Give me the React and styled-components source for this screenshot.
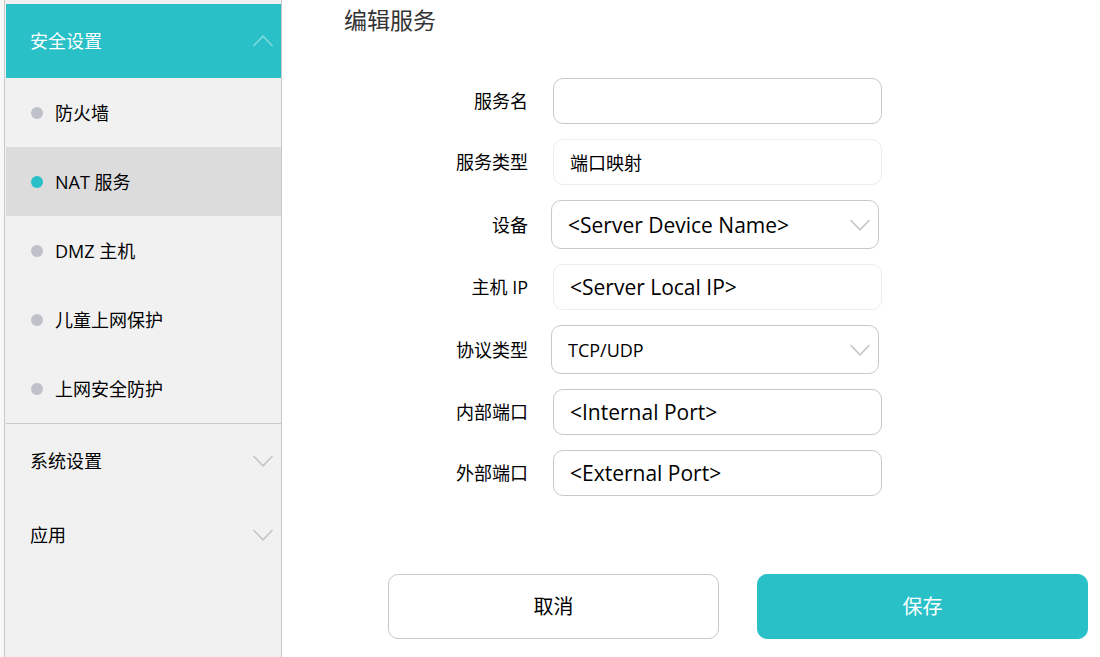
import React, { useState } from "react";
import styled, { createGlobalStyle } from "styled-components";

const TEAL = "#29c0c8";
const LINE = "#c8c8c8";

const GlobalStyle = createGlobalStyle`
  *, *::before, *::after { box-sizing: border-box; }
  body {
    margin: 0;
    background: #fff;
    color: #000;
    font-family: "Open Sans", "Noto Sans CJK SC", sans-serif;
    font-size: 18px;
    font-weight: 400;
    line-height: 24px;
  }
  button, input, select { font: inherit; color: inherit; }
`;

const Page = styled.div`
  display: flex;
  min-height: 100vh;
  background: linear-gradient(to right, #f8f8f8 4px, #fff 4px);
  padding-left: 4px;
`;

const Sidebar = styled.nav`
  flex: 0 0 278px;
  padding: 4px 0 0 1px;
  background: #f1f1f1;
  border: solid ${LINE};
  border-width: 0 1px;
`;

const SectionButton = styled.button`
  display: flex;
  align-items: center;
  justify-content: space-between;
  width: 100%;
  height: 74px;
  padding: 0 8px 0 24px;
  border: 0;
  background: ${(p) => (p.$open ? TEAL : "transparent")};
  color: ${(p) => (p.$open ? "#fff" : "#000")};
  text-align: left;
`;

const SubMenu = styled.ul`
  margin: 0;
  padding: 0;
  list-style: none;
  border-bottom: 1px solid ${LINE};
`;

const SubLink = styled.a`
  display: flex;
  align-items: center;
  gap: 12px;
  height: 69px;
  padding-left: 25px;
  background: ${(p) => (p.$active ? "#dcdcdc" : "transparent")};
  color: inherit;
  text-decoration: none;
`;

const Dot = styled.span`
  flex: none;
  width: 12px;
  height: 12px;
  border-radius: 50%;
  background: ${(p) => (p.$active ? TEAL : "#bec1c9")};
`;

const Main = styled.main`
  flex: 1;
  min-width: 0;
`;

const Title = styled.h1`
  margin: 0 0 38px;
  padding: 0 62px;
  color: #333;
  font-size: 23px;
  font-weight: 400;
  line-height: 40px;
`;

const Fields = styled.div`
  display: flex;
  flex-direction: column;
  gap: 15px;
`;

const FieldRow = styled.div`
  display: grid;
  grid-template-columns: 246fr 329fr 193fr;
  column-gap: 25px;
  align-items: center;
`;

const Label = styled.label`
  text-align: right;
`;

const TextInput = styled.input`
  width: 100%;
  height: 46px;
  padding: 0 16px;
  border: 1px solid ${(p) => (p.readOnly ? "#ededed" : LINE)};
  border-radius: 10px;
  background: #fff;
  font-size: ${(p) => (p.$large ? 21 : 18)}px;
  outline: none;
`;

const SelectBox = styled.div`
  position: relative;
  margin: 0 3px 0 -2px;
`;

const Select = styled.select`
  display: block;
  width: 100%;
  height: 49px;
  padding: 0 40px 0 16px;
  border: 1px solid ${LINE};
  border-radius: 10px;
  background: #fff;
  font-size: ${(p) => (p.$large ? 21 : 18)}px;
  appearance: none;
  outline: none;
`;

const SelectArrow = styled.span`
  position: absolute;
  inset: 0 9px 0 auto;
  display: flex;
  align-items: center;
  pointer-events: none;
`;

const Actions = styled.div`
  display: grid;
  grid-template-columns: 1fr 1fr;
  gap: 38px;
  margin-top: 78px;
  padding: 0 12px 18px 106px;
`;

const ActionButton = styled.button`
  height: 65px;
  border: 1px solid ${(p) => (p.$primary ? TEAL : LINE)};
  border-radius: 10px;
  background: ${(p) => (p.$primary ? TEAL : "#fff")};
  color: ${(p) => (p.$primary ? "#fff" : "#000")};
  font-size: 20px;
`;

function Chevron({ up, color = "#c4c4c4" }) {
  return (
    <svg width="20" height="12" viewBox="0 0 20 12" fill="none" stroke={color} strokeWidth="1.5" aria-hidden="true">
      <path d={up ? "M.5 11 10 1.2 19.5 11" : "M.5 1 10 10.8 19.5 1"} />
    </svg>
  );
}

const securityLinks = ["防火墙", "NAT 服务", "DMZ 主机", "儿童上网保护", "上网安全防护"];

const fields = [
  { id: "name", label: "服务名", value: "" },
  { id: "type", label: "服务类型", value: "端口映射", readOnly: true },
  { id: "device", label: "设备", value: "<Server Device Name>", select: true, large: true },
  { id: "ip", label: "主机 IP", value: "<Server Local IP>", readOnly: true, large: true },
  { id: "protocol", label: "协议类型", value: "TCP/UDP", select: true },
  { id: "internal", label: "内部端口", value: "<Internal Port>", large: true },
  { id: "external", label: "外部端口", value: "<External Port>", large: true },
];

function Field({ id, label, value, select, large, readOnly }) {
  return (
    <FieldRow>
      <Label htmlFor={id}>{label}</Label>
      {select ? (
        <SelectBox>
          <Select id={id} $large={large} defaultValue={value}>
            <option>{value}</option>
          </Select>
          <SelectArrow>
            <Chevron />
          </SelectArrow>
        </SelectBox>
      ) : (
        <TextInput id={id} type="text" defaultValue={value} readOnly={readOnly} $large={large} />
      )}
    </FieldRow>
  );
}

export default function App() {
  const [active, setActive] = useState("NAT 服务");
  return (
    <Page>
      <GlobalStyle />
      <Sidebar>
        <SectionButton type="button" $open aria-expanded="true">
          安全设置
          <Chevron up color="#7fdadf" />
        </SectionButton>
        <SubMenu>
          {securityLinks.map((text) => (
            <li key={text}>
              <SubLink href="#" $active={text === active} onClick={() => setActive(text)}>
                <Dot $active={text === active} />
                {text}
              </SubLink>
            </li>
          ))}
        </SubMenu>
        <SectionButton type="button" aria-expanded="false">
          系统设置
          <Chevron />
        </SectionButton>
        <SectionButton type="button" aria-expanded="false">
          应用
          <Chevron />
        </SectionButton>
      </Sidebar>
      <Main>
        <Title>编辑服务</Title>
        <form onSubmit={(e) => e.preventDefault()}>
          <Fields>
            {fields.map((field) => (
              <Field key={field.id} {...field} />
            ))}
          </Fields>
          <Actions>
            <ActionButton type="button">取消</ActionButton>
            <ActionButton type="submit" $primary>
              保存
            </ActionButton>
          </Actions>
        </form>
      </Main>
    </Page>
  );
}
